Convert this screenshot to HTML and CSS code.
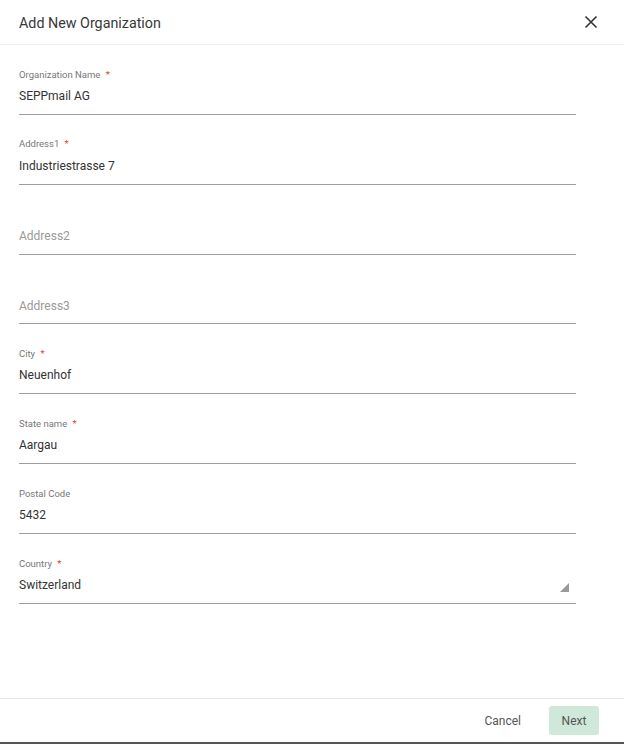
FILE: index.html
```html
<!DOCTYPE html>
<html>
<head>
<meta charset="utf-8">
<link rel="stylesheet" href="styles.css">
</head>
<body>
<div class="dialog">
  <div class="header">
    <div class="title">Add New Organization</div>
    <svg class="close" width="14" height="14" viewBox="0 0 14 14"><path d="M1.5 1.5 L12.5 12.5 M12.5 1.5 L1.5 12.5" stroke="#333" stroke-width="1.6" fill="none"/></svg>
  </div>
  <div class="body">
    <div class="field"><div class="label">Organization Name <span class="req">*</span></div><div class="value">SEPPmail AG</div></div>
    <div class="field"><div class="label">Address1 <span class="req">*</span></div><div class="value">Industriestrasse 7</div></div>
    <div class="field"><div class="label"></div><div class="value placeholder">Address2</div></div>
    <div class="field"><div class="label"></div><div class="value placeholder">Address3</div></div>
    <div class="field"><div class="label">City <span class="req">*</span></div><div class="value">Neuenhof</div></div>
    <div class="field"><div class="label">State name <span class="req">*</span></div><div class="value">Aargau</div></div>
    <div class="field"><div class="label">Postal Code</div><div class="value">5432</div></div>
    <div class="field select"><div class="label">Country <span class="req">*</span></div><div class="value">Switzerland</div><span class="arrow"></span></div>
  </div>
  <div class="footer">
    <button class="btn cancel">Cancel</button>
    <button class="btn next">Next</button>
  </div>
</div>
</body>
</html>
```
FILE: styles.css
```css
* { box-sizing: border-box; }
html, body { margin: 0; padding: 0; background: #fff; }
body { font-family: Roboto, "Liberation Sans", sans-serif; color: #333; }
.dialog {
  width: 624px; height: 744px;
  display: flex; flex-direction: column;
  border-bottom: 2px solid #555;
}
.header {
  height: 45px; flex: none;
  display: flex; align-items: center; justify-content: space-between;
  padding: 2px 26px 0 19px;
  border-bottom: 1px solid #eeeeee;
}
.title { font-size: 14.3px; color: #383838; }
.close { display: block; margin-top: -2px; }
.body { flex: 1; padding: 0 48px 0 19px; }
.field {
  position: relative;
  height: 69.86px;
  padding-top: 23.5px;
  border-bottom: 1px solid #9e9e9e;
}
.label { height: 12px; line-height: 12px; font-size: 9.5px; color: #777; }
.req { color: #e53935; margin-left: 3px; }
.value { margin-top: 7.5px; height: 16px; line-height: 16px; font-size: 12px; color: #333; }
.placeholder { color: #9a9a9a; }
.arrow {
  position: absolute; right: 7px; top: 49px;
  width: 0; height: 0;
  border-left: 9px solid transparent;
  border-bottom: 9px solid #999;
}
.footer {
  height: 44px; flex: none;
  border-top: 1px solid #e6e6e6;
  display: flex; align-items: center; justify-content: flex-end;
  padding: 0 25px 0 0; gap: 10px;
}
.btn {
  font-family: Roboto, "Liberation Sans", sans-serif;
  font-size: 12px; border: none; background: transparent;
  height: 29px; border-radius: 3px; cursor: pointer;
}
.cancel { color: #555; padding: 0 18px; }
.next { background: #cfe8d9; color: #555; width: 50px; padding: 0; }
```
